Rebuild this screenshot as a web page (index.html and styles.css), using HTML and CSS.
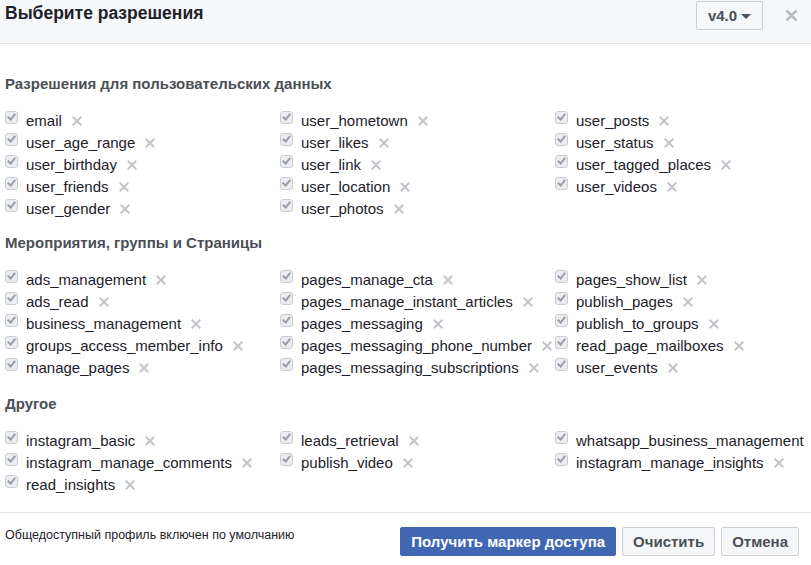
FILE: index.html
```html
<!DOCTYPE html>
<html lang="ru">
<head>
<meta charset="utf-8">
<link rel="stylesheet" href="styles.css">
</head>
<body>
<div class="dialog">
  <div class="header">
    <div class="title">Выберите разрешения</div>
    <div class="header-right">
      <div class="version">v4.0 <span class="caret"></span></div>
      <svg class="close" width="13" height="13" viewBox="0 0 13 13"><path d="M1.5 1.5L11.5 11.5M11.5 1.5L1.5 11.5" stroke="#b9bdc3" stroke-width="2.6"/></svg>
    </div>
  </div>

  <div class="body">
    <div class="section-title first">Разрешения для пользовательских данных</div>
    <div class="grid">
      <div class="col">
        <div class="item"><span class="cb"></span><span class="name">email</span><span class="x"></span></div>
        <div class="item"><span class="cb"></span><span class="name">user_age_range</span><span class="x"></span></div>
        <div class="item"><span class="cb"></span><span class="name">user_birthday</span><span class="x"></span></div>
        <div class="item"><span class="cb"></span><span class="name">user_friends</span><span class="x"></span></div>
        <div class="item"><span class="cb"></span><span class="name">user_gender</span><span class="x"></span></div>
      </div>
      <div class="col">
        <div class="item"><span class="cb"></span><span class="name">user_hometown</span><span class="x"></span></div>
        <div class="item"><span class="cb"></span><span class="name">user_likes</span><span class="x"></span></div>
        <div class="item"><span class="cb"></span><span class="name">user_link</span><span class="x"></span></div>
        <div class="item"><span class="cb"></span><span class="name">user_location</span><span class="x"></span></div>
        <div class="item"><span class="cb"></span><span class="name">user_photos</span><span class="x"></span></div>
      </div>
      <div class="col">
        <div class="item"><span class="cb"></span><span class="name">user_posts</span><span class="x"></span></div>
        <div class="item"><span class="cb"></span><span class="name">user_status</span><span class="x"></span></div>
        <div class="item"><span class="cb"></span><span class="name">user_tagged_places</span><span class="x"></span></div>
        <div class="item"><span class="cb"></span><span class="name">user_videos</span><span class="x"></span></div>
      </div>
    </div>

    <div class="section-title">Мероприятия, группы и Страницы</div>
    <div class="grid">
      <div class="col">
        <div class="item"><span class="cb"></span><span class="name">ads_management</span><span class="x"></span></div>
        <div class="item"><span class="cb"></span><span class="name">ads_read</span><span class="x"></span></div>
        <div class="item"><span class="cb"></span><span class="name">business_management</span><span class="x"></span></div>
        <div class="item"><span class="cb"></span><span class="name">groups_access_member_info</span><span class="x"></span></div>
        <div class="item"><span class="cb"></span><span class="name">manage_pages</span><span class="x"></span></div>
      </div>
      <div class="col">
        <div class="item"><span class="cb"></span><span class="name">pages_manage_cta</span><span class="x"></span></div>
        <div class="item"><span class="cb"></span><span class="name">pages_manage_instant_articles</span><span class="x"></span></div>
        <div class="item"><span class="cb"></span><span class="name">pages_messaging</span><span class="x"></span></div>
        <div class="item"><span class="cb"></span><span class="name">pages_messaging_phone_number</span><span class="x"></span></div>
        <div class="item"><span class="cb"></span><span class="name">pages_messaging_subscriptions</span><span class="x"></span></div>
      </div>
      <div class="col">
        <div class="item"><span class="cb"></span><span class="name">pages_show_list</span><span class="x"></span></div>
        <div class="item"><span class="cb"></span><span class="name">publish_pages</span><span class="x"></span></div>
        <div class="item"><span class="cb"></span><span class="name">publish_to_groups</span><span class="x"></span></div>
        <div class="item"><span class="cb"></span><span class="name">read_page_mailboxes</span><span class="x"></span></div>
        <div class="item"><span class="cb"></span><span class="name">user_events</span><span class="x"></span></div>
      </div>
    </div>

    <div class="section-title third">Другое</div>
    <div class="grid">
      <div class="col">
        <div class="item"><span class="cb"></span><span class="name">instagram_basic</span><span class="x"></span></div>
        <div class="item"><span class="cb"></span><span class="name">instagram_manage_comments</span><span class="x"></span></div>
        <div class="item"><span class="cb"></span><span class="name">read_insights</span><span class="x"></span></div>
      </div>
      <div class="col">
        <div class="item"><span class="cb"></span><span class="name">leads_retrieval</span><span class="x"></span></div>
        <div class="item"><span class="cb"></span><span class="name">publish_video</span><span class="x"></span></div>
      </div>
      <div class="col">
        <div class="item"><span class="cb"></span><span class="name">whatsapp_business_management</span><span class="x"></span></div>
        <div class="item"><span class="cb"></span><span class="name">instagram_manage_insights</span><span class="x"></span></div>
      </div>
    </div>
  </div>

  <div class="footer">
    <div class="note">Общедоступный профиль включен по умолчанию</div>
    <div class="buttons">
      <button class="btn primary">Получить маркер доступа</button>
      <button class="btn">Очистить</button>
      <button class="btn">Отмена</button>
    </div>
  </div>
</div>
</body>
</html>
```

FILE: styles.css
```css
html, body {
  margin: 0;
  padding: 0;
  background: #fff;
}
body {
  font-family: "Liberation Sans", Arial, sans-serif;
  color: #1d2129;
  width: 811px;
  height: 565px;
  overflow: hidden;
}
.dialog {
  display: flex;
  flex-direction: column;
  height: 565px;
}
.header {
  height: 43px;
  background: #f6f7f9;
  border-bottom: 1px solid #e5e5e5;
  display: flex;
  justify-content: space-between;
  align-items: flex-start;
  padding: 0 0 0 5px;
  box-sizing: content-box;
}
.title {
  font-size: 17.5px;
  font-weight: bold;
  color: #1d2129;
  margin-top: 3px;
}
.header-right {
  display: flex;
  align-items: flex-start;
}
.version {
  margin-top: 1px;
  width: 65px;
  height: 27px;
  border: 1px solid #ccd0d5;
  border-radius: 2px;
  background: #f6f7f9;
  font-size: 15px;
  font-weight: bold;
  color: #4b4f56;
  display: flex;
  align-items: center;
  justify-content: center;
  gap: 4px;
}
.caret {
  width: 0;
  height: 0;
  border-left: 5px solid transparent;
  border-right: 5px solid transparent;
  border-top: 5px solid #4b4f56;
  margin-top: 1px;
}
.close {
  margin: 9px 13px 0 22px;
}
.body {
  flex: 1;
  padding: 0 5px;
  overflow: hidden;
}
.section-title {
  font-size: 15px;
  font-weight: bold;
  color: #4b4f56;
  margin-top: 16px;
  margin-bottom: 17px;
  line-height: 16px;
}
.section-title.first {
  margin-top: 32px;
}
.section-title.third {
  margin-top: 18px;
}
.grid {
  display: flex;
}
.col {
  width: 275px;
  flex: none;
  display: flex;
  flex-direction: column;
}
.item {
  height: 22px;
  display: flex;
  align-items: center;
  font-size: 15px;
  white-space: nowrap;
}
.cb {
  width: 11px;
  height: 11px;
  border: 1px solid #c9ccd1;
  border-radius: 3px;
  background: #ebedf0;
  margin-right: 8px;
  margin-top: -5px;
  position: relative;
  flex: none;
}
.cb::after {
  content: "";
  position: absolute;
  left: 3px;
  top: 0px;
  width: 3px;
  height: 6px;
  border-right: 2px solid #9a9ea5;
  border-bottom: 2px solid #9a9ea5;
  transform: rotate(40deg);
}
.name {
  color: #1d2129;
}
.x {
  width: 10px;
  height: 10px;
  margin-left: 10px;
  margin-top: 2px;
  position: relative;
  flex: none;
}
.x::before, .x::after {
  content: "";
  position: absolute;
  left: 4px;
  top: -1px;
  width: 2px;
  height: 12px;
  background: #c1c4c9;
  transform: rotate(45deg);
}
.x::after {
  transform: rotate(-45deg);
}
.footer {
  border-top: 1px solid #e5e5e5;
  height: 53px;
  display: flex;
  justify-content: space-between;
  align-items: flex-start;
  padding: 0 12px 0 5px;
  box-sizing: border-box;
}
.note {
  font-size: 12.5px;
  color: #1d2129;
  margin-top: 15px;
}
.buttons {
  display: flex;
  gap: 6px;
  margin-top: 14px;
}
.btn {
  height: 29px;
  padding: 0 10px;
  font-family: "Liberation Sans", Arial, sans-serif;
  font-size: 15px;
  font-weight: bold;
  border: 1px solid #ccd0d5;
  border-radius: 2px;
  background: #f6f7f9;
  color: #4b4f56;
}
.btn.primary {
  background: #4267b2;
  border-color: #4267b2;
  color: #fff;
}
```
